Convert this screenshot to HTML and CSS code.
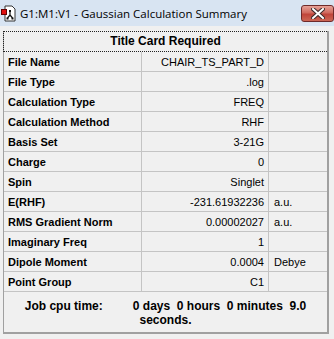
FILE: index.html
```html
<!DOCTYPE html>
<html lang="en">
<head>
    <meta charset="UTF-8">
    <title>G1:M1:V1 - Gaussian Calculation Summary</title>
    <link rel="stylesheet" href="styles.css">
</head>
<body>
    <div class="window">
        <!-- Title bar -->
        <div class="titlebar">
            <svg class="app-icon" width="16" height="18" viewBox="0 0 16 18">
                <path d="M4 1 H11 L14 4 V16 H4 Z" fill="#fff" stroke="#333" stroke-width="1"/>
                <rect x="0.5" y="4.5" width="5" height="5" fill="#e01010" stroke="#600" stroke-width="1"/>
                <path d="M9 6 V10 M9 10 L6.5 13 M9 10 L11.5 13" stroke="#111" stroke-width="1.2" fill="none"/>
                <rect x="8" y="5" width="2" height="2" fill="#111"/>
                <rect x="5.5" y="12.5" width="2" height="2" fill="#111"/>
                <rect x="10.5" y="12.5" width="2" height="2" fill="#111"/>
            </svg>
            <span class="title">G1:M1:V1 - Gaussian Calculation Summary</span>
            <div class="close-btn">
                <svg width="14" height="11" viewBox="0 0 14 11">
                    <path d="M2 1 L12 10 M12 1 L2 10" stroke="#3c2a2a" stroke-width="4" stroke-linecap="square"/>
                    <path d="M2 1 L12 10 M12 1 L2 10" stroke="#fff" stroke-width="2" stroke-linecap="square"/>
                </svg>
            </div>
        </div>

        <!-- Summary -->
        <div class="client">
            <div class="summary">
                <div class="title-card">Title Card Required</div>
                <table class="grid">
                    <tr><td class="name">File Name</td><td class="value">CHAIR_TS_PART_D</td><td class="unit"></td></tr>
                    <tr><td class="name">File Type</td><td class="value">.log</td><td class="unit"></td></tr>
                    <tr><td class="name">Calculation Type</td><td class="value">FREQ</td><td class="unit"></td></tr>
                    <tr><td class="name">Calculation Method</td><td class="value">RHF</td><td class="unit"></td></tr>
                    <tr><td class="name">Basis Set</td><td class="value">3-21G</td><td class="unit"></td></tr>
                    <tr><td class="name">Charge</td><td class="value">0</td><td class="unit"></td></tr>
                    <tr><td class="name">Spin</td><td class="value">Singlet</td><td class="unit"></td></tr>
                    <tr><td class="name">E(RHF)</td><td class="value">-231.61932236</td><td class="unit">a.u.</td></tr>
                    <tr><td class="name">RMS Gradient Norm</td><td class="value">0.00002027</td><td class="unit">a.u.</td></tr>
                    <tr><td class="name">Imaginary Freq</td><td class="value">1</td><td class="unit"></td></tr>
                    <tr><td class="name">Dipole Moment</td><td class="value">0.0004</td><td class="unit">Debye</td></tr>
                    <tr><td class="name">Point Group</td><td class="value">C1</td><td class="unit"></td></tr>
                </table>
                <div class="cpu">Job cpu time:         0 days  0 hours  0 minutes  9.0<br>seconds.</div>
            </div>
        </div>
    </div>
</body>
</html>
```

FILE: styles.css
```css
/* Window frame */
body {
    margin: 0;
    padding: 0;
    background: #f0f0f0;
    font-family: "Liberation Sans", Arial, sans-serif;
}

.window {
    width: 334px;
    height: 339px;
    overflow: hidden;
    background: #f0f0f0;
}

.titlebar {
    height: 26px;
    background: #d8e4f2;
    display: flex;
    align-items: center;
    position: relative;
}

.app-icon {
    margin-left: 1px;
    margin-top: 1px;
}

.title {
    margin-left: 3px;
    font-family: "Open Sans", "Noto Sans", sans-serif;
    font-size: 11.5px;
    color: #000;
}

.close-btn {
    position: absolute;
    left: 301px;
    top: 5px;
    width: 31px;
    height: 15px;
    border: 1px solid #6e2a2a;
    border-radius: 3px;
    background: linear-gradient(180deg, #e6a198 0%, #d06a5e 45%, #c0443a 55%, #cc6654 100%);
    display: flex;
    align-items: center;
    justify-content: center;
}

/* Client area */
.client {
    padding: 5px 0 0 3px;
}

.summary {
    width: 323px;
    border-left: 1px solid #a0a0a0;
    border-right: 2px solid #a0a0a0;
    border-bottom: 2px solid #a0a0a0;
    font-size: 11px;
    color: #000;
}

.title-card {
    height: 19px;
    line-height: 19px;
    margin-left: -1px;
    border: 1px dotted #222;
    border-right: none;
    text-align: center;
    font-weight: bold;
    font-size: 12px;
}

.grid {
    border-collapse: collapse;
    width: 323px;
    table-layout: fixed;
}

.grid td {
    height: 19px;
    padding: 0;
    border-bottom: 1px solid #c4c4c4;
    white-space: nowrap;
    overflow: hidden;
}

.grid .name {
    width: 133px;
    padding-left: 4px;
    border-right: 1px solid #c4c4c4;
    font-weight: bold;
}

.grid .value {
    width: 122px;
    padding-right: 4px;
    text-align: right;
    border-right: 1px solid #c4c4c4;
}

.grid .unit {
    padding-left: 5px;
}

.cpu {
    height: 40px;
    box-sizing: border-box;
    padding-top: 7px;
    line-height: 14px;
    text-align: center;
    font-weight: bold;
    font-size: 12px;
    white-space: pre;
}
```
